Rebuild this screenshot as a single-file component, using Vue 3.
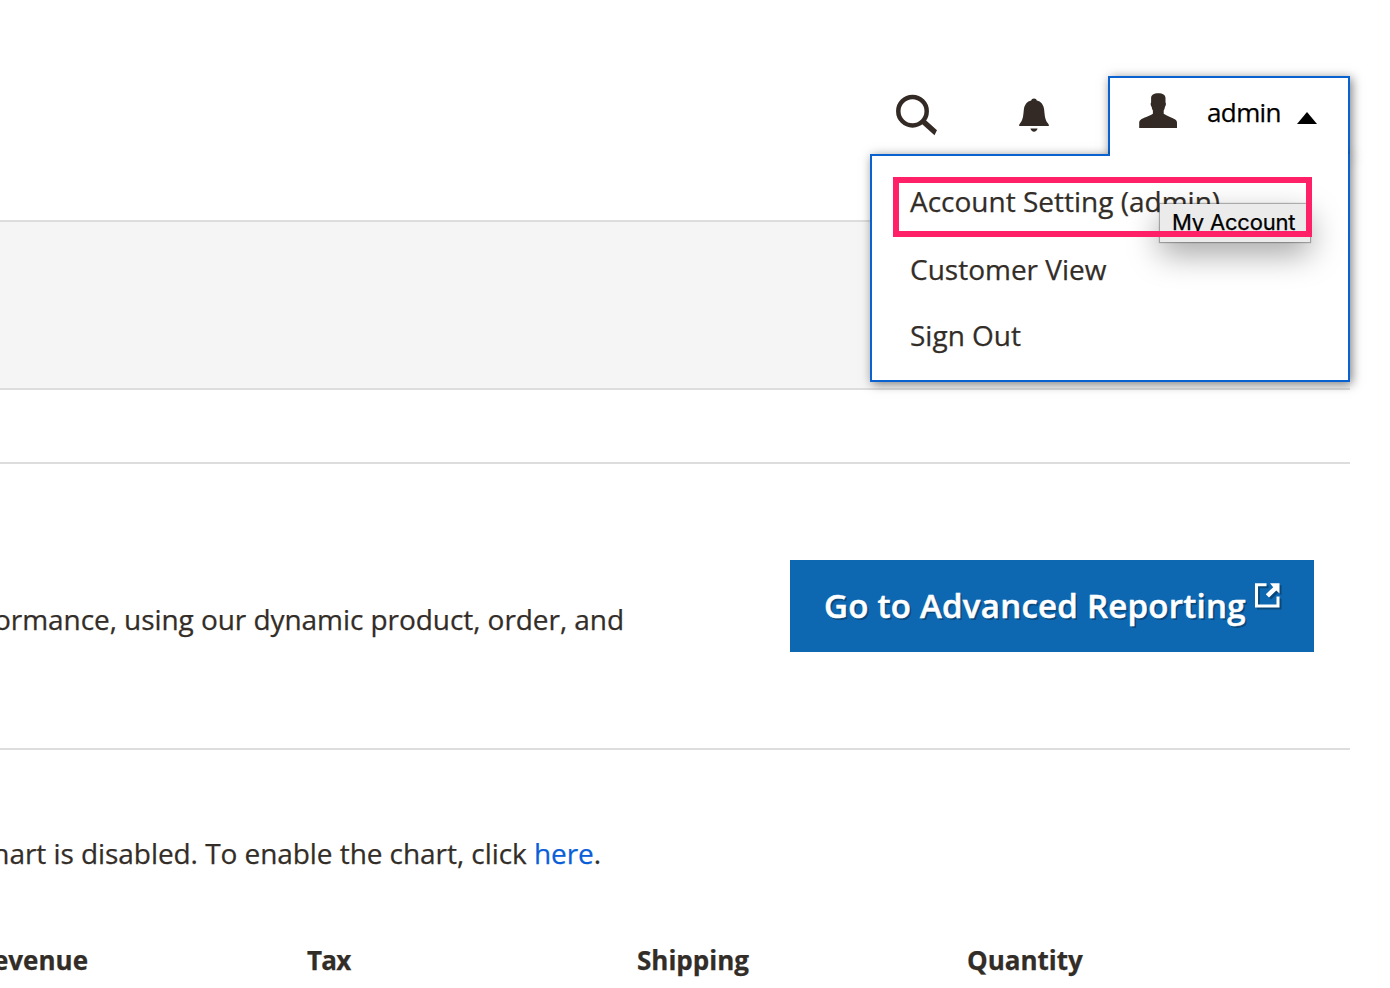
<script setup>
const menuItems = ['Account Setting (admin)', 'Customer View', 'Sign Out']
const totals = ['Revenue', 'Tax', 'Shipping', 'Quantity']
</script>

<template>
  <div class="page">
    <header class="header">
      <svg class="icon search" viewBox="0 0 44 44" width="44" height="44">
        <circle cx="18.5" cy="17.200" r="14.200" fill="none" stroke="#332a25" stroke-width="4.500" />
        <path d="M30.500 25 L43 36.300 L42.300 37.500 L40.500 41.300 L26.800 29 Z" fill="#332a25" />
      </svg>
      <svg class="icon bell" viewBox="0 0 32 36" width="32" height="36">
        <path
          d="M16 1.500c1.600 0 2.500.9 2.800 2.100C23 4.500 25.600 7.800 26.200 13c.6 6 .9 10.500 4.200 13.900.5.6.6 1.300.4 2.100H1.200c-.2-.8-.1-1.500.4-2.100C4.900 23.500 5.200 19 5.800 13 6.400 7.800 9 4.500 13.200 3.600 13.500 2.400 14.400 1.500 16 1.500zM12.400 31.500h7.200c-.5 2-1.900 3.200-3.600 3.200s-3.100-1.200-3.600-3.200z"
          fill="#332a25"
        />
      </svg>
      <div class="account">
        <div class="toggle"></div>
        <button class="toggle-face">
          <svg class="user" viewBox="0 0 38 35" width="38" height="35">
            <path
              d="M19.300.2c4.500 0 7.300 1.600 7.200 5v4.200c.8.700.5 3-.6 4.600-.2 1.600-.6 2.600-1.200 3.500v3.300c4 2.700 9 4 11.500 5.700 1.400 1 1.800 2 1.800 3.500v5H.2v-5c0-1.500.4-2.500 1.800-3.500 2.500-1.700 7.800-3 11.900-5.700v-3.300c-.6-.9-1-1.900-1.200-3.500-1.100-1.600-1.400-3.900-.6-4.600V5.200c-.1-3.400 2.700-5 7.200-5z"
              fill="#332a25"
            />
          </svg>
          <span class="name">admin</span>
          <svg class="caret" viewBox="0 0 20 12" width="20" height="12">
            <path d="M10 0L20 12H0z" fill="#000" />
          </svg>
        </button>
        <nav class="menu">
          <a v-for="item in menuItems" :key="item" class="item">{{ item }}</a>
          <span class="tooltip">My Account</span>
          <span class="marker"></span>
        </nav>
      </div>
    </header>

    <div class="band"></div>
    <div class="spacer"></div>

    <section class="reporting">
      <p class="copy intro">performance, using our dynamic product, order, and</p>
      <a class="button">
        <span class="label">Go to Advanced Reporting</span>
        <svg class="external" viewBox="0 0 28 28" width="28" height="28">
          <g class="drop">
            <path d="M12.500 2.800H2.500V24H24V14.500" fill="none" stroke="currentColor" stroke-width="3" />
            <path d="M16 1.300H25.500V11.500L22.300 8.600L15 15.500L11.800 12.300L19.200 5.200Z" fill="currentColor" />
          </g>
        </svg>
      </a>
    </section>

    <p class="copy chart">Chart is disabled. To enable the chart, click <a class="link">here</a>.</p>

    <div class="totals">
      <div v-for="total in totals" :key="total" class="total"><span>{{ total }}</span></div>
    </div>
  </div>
</template>

<style>
body {
  margin: 0;
  background: #fff;
}
</style>

<style scoped>
.page {
  width: 1390px;
  height: 988px;
  overflow: hidden;
  background: #fff;
  color: #332d28;
  font-family: 'Open Sans', 'Noto Sans', sans-serif;
  font-size: 28px;
  -webkit-text-stroke: 0.25px currentColor;
}
.header {
  display: flex;
  justify-content: flex-end;
  align-items: flex-start;
  box-sizing: border-box;
  height: 220px;
  padding: 76px 40px 0 0;
}
.icon {
  display: block;
  flex: none;
}
.search {
  margin: 17.5px 80px 0 0;
}
.bell {
  margin: 21px 58px 0 0;
}
.account {
  position: relative;
  z-index: 2;
  width: 242px;
  height: 80px;
}
.toggle {
  box-sizing: border-box;
  height: 80px;
  border: 2px solid #0a62d0;
  border-bottom: 0;
  box-shadow: 2px 2px 10px rgba(0, 0, 0, 0.5);
}
.toggle-face {
  position: absolute;
  z-index: 2;
  inset: 2px 2px 0;
  display: flex;
  align-items: flex-start;
  padding: 0 0 0 29px;
  border: 0;
  background: #fff;
  color: #000;
  font: 26px/36px 'Open Sans', sans-serif;
}
.user {
  margin-top: 15px;
}
.name {
  width: 74px;
  margin: 16px 16px 0 30px;
  letter-spacing: -0.6px;
  text-align: left;
  white-space: nowrap;
}
.caret {
  margin-top: 34px;
}
.menu {
  position: absolute;
  z-index: 1;
  top: 78px;
  right: 0;
  box-sizing: border-box;
  width: 480px;
  height: 228px;
  padding: 12px 0 0 38px;
  border: 2px solid #0a62d0;
  background: #fff;
  box-shadow: 2px 2px 10px rgba(0, 0, 0, 0.5);
}
.item {
  display: block;
  height: 66px;
  line-height: 66px;
  white-space: nowrap;
}
.item:first-child {
  height: 68px;
}
.tooltip {
  position: absolute;
  top: 48px;
  left: 288px;
  box-sizing: border-box;
  width: 150px;
  height: 38px;
  padding-left: 12px;
  background: #ebebeb;
  box-shadow: 0 0 1px 1px rgba(0, 0, 0, 0.28), 0 12px 32px rgba(0, 0, 0, 0.36);
  color: #000;
  font: 22px/37px Inter, sans-serif;
  letter-spacing: -0.2px;
  white-space: nowrap;
}
.marker {
  position: absolute;
  top: 21px;
  left: 21px;
  box-sizing: border-box;
  width: 419px;
  height: 60px;
  border: 6px solid #ff2068;
}
.band {
  box-sizing: border-box;
  width: 1350px;
  height: 170px;
  border: solid #ddd;
  border-width: 2px 0;
  background: #f5f5f5;
}
.spacer {
  box-sizing: border-box;
  width: 1350px;
  height: 74px;
  border-bottom: 2px solid #ddd;
}
.reporting {
  display: flex;
  align-items: flex-start;
  justify-content: space-between;
  box-sizing: border-box;
  width: 1350px;
  height: 286px;
  padding: 96px 36px 0 0;
  border-bottom: 2px solid #ddd;
}
.copy {
  display: flex;
  justify-content: flex-end;
  margin: 0;
  overflow: hidden;
  line-height: 40px;
  letter-spacing: -0.06px;
  white-space: pre;
}
.intro {
  width: 624px;
  margin-top: 39px;
}
.button {
  display: flex;
  align-items: flex-start;
  box-sizing: border-box;
  width: 524px;
  height: 92px;
  padding-left: 34px;
  background: #0e68b1;
  color: #fff;
  text-shadow: 2px 2px 0 rgba(0, 0, 0, 0.3);
}
.label {
  width: 422px;
  font-size: 33px;
  font-weight: 650;
  line-height: 92px;
  letter-spacing: 0.26px;
  white-space: nowrap;
  -webkit-text-stroke: 0.5px currentColor;
}
.external {
  margin: 22px 0 0 8px;
  overflow: visible;
}
.drop {
  filter: drop-shadow(2px 2px 0 rgba(0, 0, 0, 0.3));
}
.chart {
  width: 601px;
  margin-top: 83px;
}
.link {
  color: #0a5fd8;
}
.totals {
  display: grid;
  grid-template-columns: 307px 330px 330px 330px;
  margin-top: 69px;
  font-size: 26px;
  font-weight: 700;
  line-height: 36px;
}
.total:first-child {
  display: flex;
  justify-content: flex-end;
  width: 88px;
  overflow: hidden;
}
.total:nth-child(2) {
  letter-spacing: -0.8px;
}
</style>
